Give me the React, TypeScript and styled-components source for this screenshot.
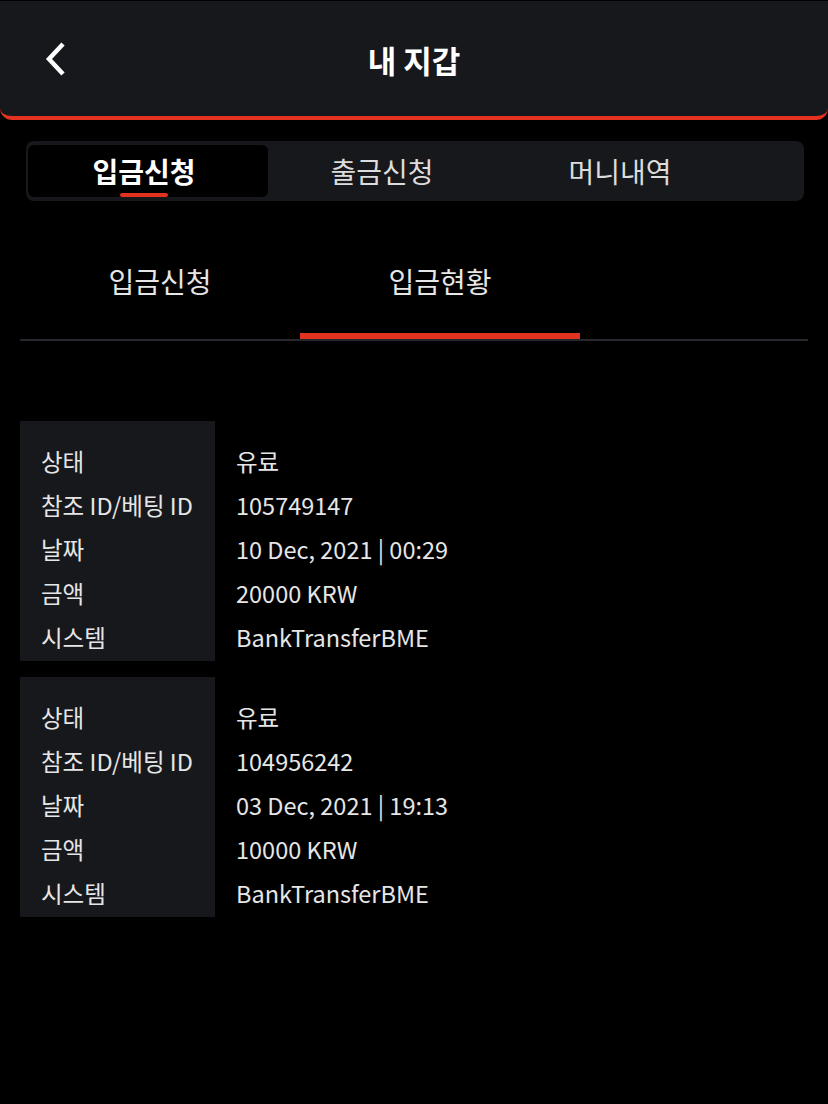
import React, { useState } from "react";
import styled, { createGlobalStyle } from "styled-components";

const GlobalStyle = createGlobalStyle`
  * { margin: 0; padding: 0; box-sizing: border-box; }
  body {
    background: #000;
    font-family: "Noto Sans CJK KR", "Noto Sans", sans-serif;
    color: #e6e6e6;
  }
`;

const Page = styled.div`
  width: 828px;
  min-height: 1104px;
  background: #000;
`;

const Header = styled.header`
  position: relative;
  height: 119px;
  background: #17181c;
  border-bottom: 4px solid #e3321f;
  border-radius: 0 0 12px 12px;
  display: flex;
  align-items: center;
  justify-content: center;
  margin-top: 1px;
`;

const BackButton = styled.button`
  position: absolute;
  left: 40px;
  top: 38px;
  width: 32px;
  height: 40px;
  background: none;
  border: none;
  display: flex;
  align-items: center;
  justify-content: center;
  cursor: pointer;
`;

const Title = styled.h1`
  font-size: 31px;
  font-weight: 700;
  color: #fff;
  margin-top: 2px;
`;

const MainTabs = styled.nav`
  margin: 21px 24px 0 26px;
  height: 60px;
  background: #17181c;
  border-radius: 8px;
  padding: 4px 2px;
  display: flex;
`;

const MainTab = styled.button<{ $active?: boolean }>`
  position: relative;
  width: 240px;
  margin-right: -2px;
  padding-right: 8px;
  height: 52px;
  border: none;
  border-radius: 6px;
  background: ${(p) => (p.$active ? "#000" : "transparent")};
  color: ${(p) => (p.$active ? "#fff" : "#dcdcdc")};
  font-family: inherit;
  font-size: 28px;
  font-weight: ${(p) => (p.$active ? 700 : 400)};
  display: flex;
  align-items: center;
  justify-content: center;
  cursor: pointer;

  &::after {
    content: "";
    display: ${(p) => (p.$active ? "block" : "none")};
    position: absolute;
    left: 92px;
    bottom: 0;
    width: 48px;
    height: 4px;
    border-radius: 2px;
    background: #e3321f;
  }
`;

const SubTabs = styled.div`
  margin: 36px 20px 0;
  display: flex;
  border-bottom: 2px solid #26272d;
`;

const SubTab = styled.button<{ $active?: boolean }>`
  width: 280px;
  height: 102px;
  padding-bottom: 8px;
  background: none;
  border: none;
  border-bottom: 6px solid ${(p) => (p.$active ? "#e3321f" : "transparent")};
  color: #e6e6e6;
  font-family: inherit;
  font-size: 28px;
  font-weight: 400;
  cursor: pointer;
`;

const List = styled.section`
  margin: 80px 20px 0;
  display: flex;
  flex-direction: column;
  gap: 16px;
`;

const Card = styled.div`
  display: grid;
  grid-template-columns: 195px 1fr;
  background: linear-gradient(to right, #17181c 195px, transparent 195px);
  padding-top: 18px;
  padding-bottom: 2px;
`;

const Cell = styled.div`
  height: 44px;
  line-height: 44px;
  padding-left: 21px;
  font-size: 23.5px;
  color: #e6e6e6;
  white-space: nowrap;
`;

type Deposit = {
  status: string;
  refId: string;
  date: string;
  amount: string;
  system: string;
};

const deposits: Deposit[] = [
  { status: "유료", refId: "105749147", date: "10 Dec, 2021 | 00:29", amount: "20000 KRW", system: "BankTransferBME" },
  { status: "유료", refId: "104956242", date: "03 Dec, 2021 | 19:13", amount: "10000 KRW", system: "BankTransferBME" },
];

function DepositCard({ item }: { item: Deposit }) {
  const rows: [string, string][] = [
    ["상태", item.status],
    ["참조 ID/베팅 ID", item.refId],
    ["날짜", item.date],
    ["금액", item.amount],
    ["시스템", item.system],
  ];
  return (
    <Card>
      {rows.map(([label, value]) => (
        <React.Fragment key={label}>
          <Cell>{label}</Cell>
          <Cell>{value}</Cell>
        </React.Fragment>
      ))}
    </Card>
  );
}

export default function App() {
  const [mainTab, setMainTab] = useState(0);
  const [subTab, setSubTab] = useState(1);
  const mainTabs = ["입금신청", "출금신청", "머니내역"];
  const subTabs = ["입금신청", "입금현황"];

  return (
    <Page>
      <GlobalStyle />
      <Header>
        <BackButton aria-label="back">
          <svg width="22" height="34" viewBox="0 0 22 34" fill="none">
            <polyline points="18,2 4,17 18,32" stroke="#fff" strokeWidth="4.5" strokeLinejoin="miter" />
          </svg>
        </BackButton>
        <Title>내 지갑</Title>
      </Header>

      <MainTabs>
        {mainTabs.map((t, i) => (
          <MainTab key={t} $active={mainTab === i} onClick={() => setMainTab(i)}>
            {t}
          </MainTab>
        ))}
      </MainTabs>

      <SubTabs>
        {subTabs.map((t, i) => (
          <SubTab key={t} $active={subTab === i} onClick={() => setSubTab(i)}>
            {t}
          </SubTab>
        ))}
      </SubTabs>

      <List>
        {deposits.map((d) => (
          <DepositCard key={d.refId} item={d} />
        ))}
      </List>
    </Page>
  );
}
